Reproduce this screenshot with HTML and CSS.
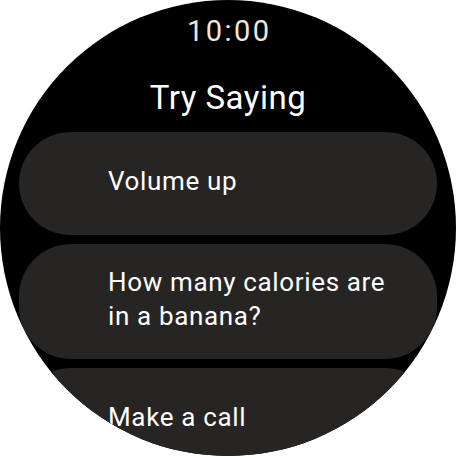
FILE: index.html
```html
<!DOCTYPE html>
<html>
<head>
<meta charset="utf-8">
<link rel="stylesheet" href="styles.css">
</head>
<body>
<div class="watch">
  <div class="time">10:00</div>
  <div class="title">Try Saying</div>
  <div class="list">
    <div class="chip"><span class="label">Volume up</span></div>
    <div class="chip"><span class="label">How many calories are in a banana?</span></div>
    <div class="chip"><span class="label">Make a call</span></div>
  </div>
</div>
</body>
</html>
```
FILE: styles.css
```css
html, body {
  margin: 0;
  padding: 0;
  background: #ffffff;
}
.watch {
  width: 456px;
  height: 456px;
  border-radius: 50%;
  background: #000000;
  overflow: hidden;
  display: flex;
  flex-direction: column;
  align-items: center;
  padding: 14px 19px 0;
  box-sizing: border-box;
  font-family: Roboto, "Liberation Sans", sans-serif;
}
.time {
  font-size: 29px;
  line-height: 34px;
  letter-spacing: 2.5px;
  color: #ede7dc;
  padding-left: 2.5px;
}
.title {
  margin-top: 30px;
  font-size: 33px;
  line-height: 40px;
  letter-spacing: 0.5px;
  color: #ffffff;
}
.list {
  margin-top: 14px;
  width: 100%;
  display: flex;
  flex-direction: column;
  gap: 9px;
}
.chip {
  min-height: 103px;
  box-sizing: border-box;
  background: #262524;
  border-radius: 52px;
  padding: 21px 30px 26px 89px;
  display: flex;
  align-items: center;
  flex-shrink: 0;
}
.label {
  font-size: 26px;
  line-height: 34px;
  letter-spacing: 0.65px;
  color: #ffffff;
}
```
